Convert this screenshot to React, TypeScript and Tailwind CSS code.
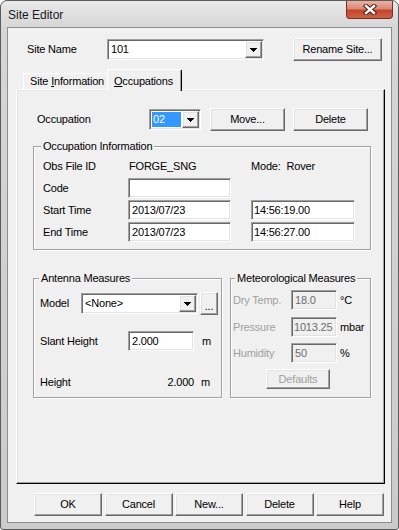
import React from "react";

const sunken =
  "border border-t-[#a0a0a0] border-l-[#a0a0a0] border-r-white border-b-white shadow-[inset_1px_1px_0_#696969,inset_-1px_-1px_0_#e3e3e3]";
const raised =
  "border border-t-white border-l-white border-r-[#696969] border-b-[#696969] shadow-[inset_-1px_-1px_0_#a0a0a0,inset_1px_1px_0_#e3e3e3] bg-[#f0f0f0]";

function DropArrow() {
  return (
    <svg width="7" height="4" viewBox="0 0 7 4" shapeRendering="crispEdges">
      <path d="M0 0h7v1h-1v1h-1v1h-1v1h-1v-1h-1v-1h-1v-1h-1z" fill="#000" />
    </svg>
  );
}

function Combo({
  value,
  className = "",
  highlighted = false,
}: {
  value: string;
  className?: string;
  highlighted?: boolean;
}) {
  return (
    <div className={`${sunken} bg-white flex p-[1px] ${className}`}>
      <div className="flex-1 min-w-0 flex p-[1px]">
        <div
          className={`flex-1 flex items-center pl-[1px] ${
            highlighted ? "bg-[#3399ff] text-white" : ""
          }`}
        >
          {value}
        </div>
      </div>
      <div className={`${raised} w-[17px] shrink-0 flex items-center justify-center`}>
        <DropArrow />
      </div>
    </div>
  );
}

function Field({
  value = "",
  className = "",
  disabled = false,
}: {
  value?: string;
  className?: string;
  disabled?: boolean;
}) {
  return (
    <div
      className={`${sunken} flex items-center pl-[3px] ${
        disabled ? "bg-[#f0f0f0] text-[#6d6d6d]" : "bg-white"
      } ${className}`}
    >
      {value}
    </div>
  );
}

function Btn({
  children,
  className = "",
  disabled = false,
}: {
  children: React.ReactNode;
  className?: string;
  disabled?: boolean;
}) {
  return (
    <button
      type="button"
      className={`${raised} flex items-center justify-center ${
        disabled ? "text-[#a0a0a0]" : "text-black"
      } ${className}`}
    >
      {children}
    </button>
  );
}

function Group({
  title,
  legendClass,
  className = "",
  children,
}: {
  title: string;
  legendClass: string;
  className?: string;
  children: React.ReactNode;
}) {
  return (
    <fieldset
      className={`border border-[#a0a0a0] shadow-[1px_1px_0_#fff,inset_1px_1px_0_#fff] ${className}`}
    >
      <legend className={`px-[2px] leading-[13px] bg-[#f0f0f0] ${legendClass}`}>{title}</legend>
      {children}
    </fieldset>
  );
}

function CloseButton() {
  return (
    <div className="mr-[5px] w-[47px] h-[18px] rounded-b-[4px] border border-t-0 border-[#7b2e20] bg-[linear-gradient(180deg,#eab0a2_0%,#d98a76_45%,#c4452c_55%,#cc6247_100%)] flex items-center justify-center">
      <svg width="14" height="11" viewBox="0 0 14 11">
        <path d="M3 2L11 9M11 2L3 9" stroke="#4d1a10" strokeWidth="4.4" strokeLinecap="square" />
        <path d="M3 2L11 9M11 2L3 9" stroke="#fff" strokeWidth="2.4" strokeLinecap="square" />
      </svg>
    </div>
  );
}

export default function App() {
  return (
    <div className="font-['Liberation_Sans',Arial,sans-serif] text-[11px] leading-[13px] tracking-[-0.2px] text-black w-[399px] h-[530px] flex flex-col border border-[#5b5b5b] rounded-t-[7px] rounded-b-[3px] overflow-hidden bg-[linear-gradient(180deg,#e9e9e9_0px,#d6d6d6_26px,#cbcbcb_100%)]">
      {/* title bar */}
      <div className="h-[26px] shrink-0 flex items-start justify-between">
        <div className="pl-[7px] pt-[7px] text-[12px] leading-[15px] tracking-normal text-[#1a1a1a]">Site Editor</div>
        <CloseButton />
      </div>

      {/* client area */}
      <div className="mx-[6px] mb-[6px] flex-1 border border-[#8e8e8e] bg-[#f0f0f0] flex flex-col">
        {/* site name row */}
        <div className="mt-[10px] pl-[19px] h-[23px] flex items-center">
          <span className="w-[80px]">Site Name</span>
          <Combo value="101" className="w-[157px] h-[21px]" />
          <Btn className="ml-[29px] w-[89px] h-[23px]">Rename Site...</Btn>
        </div>

        {/* tabs */}
        <div className="mt-[8px] pl-[15px] h-[20px] flex items-end relative z-10">
          <div className="w-[84px] h-[16px] border-t border-l border-white rounded-tl-[2px] flex items-center pl-[6px]">
            Site <span className="underline underline-offset-1 ml-[3px]">I</span>nformation
          </div>
          <div className="w-[75px] h-[22px] -mb-[2px] bg-[#f0f0f0] border-t border-l border-r border-t-white border-l-white border-r-black rounded-t-[2px] shadow-[inset_-1px_0_0_#a0a0a0] flex items-start pt-[5px] pl-[6px]">
            <span className="underline underline-offset-1">O</span>ccupations
          </div>
        </div>

        {/* tab panel */}
        <div className="ml-[8px] w-[369px] h-[395px] border border-t-white border-l-white border-r-black border-b-black shadow-[inset_-1px_-1px_0_#a0a0a0,inset_1px_1px_0_#e3e3e3] flex flex-col">
          {/* occupation row */}
          <div className="mt-[18px] pl-[20px] h-[23px] flex items-center">
            <span className="w-[112px]">Occupation</span>
            <Combo value="02" highlighted className="w-[52px] h-[21px]" />
            <Btn className="ml-[9px] w-[75px] h-[23px]">Move...</Btn>
            <Btn className="ml-[8px] w-[75px] h-[23px]">Delete</Btn>
          </div>

          {/* occupation information */}
          <Group
            title="Occupation Information"
            legendClass="ml-[7px]"
            className="mt-[9px] ml-[16px] w-[338px]"
          >
            <div className="pl-[9px] pt-[3px] pb-[7px] flex flex-col gap-[2px]">
              <div className="h-[20px] flex items-center">
                <span className="w-[85px]">Obs File ID</span>
                <span className="w-[123px] pl-[1px]">FORGE_SNG</span>
                <span>Mode:</span>
                <span className="ml-[6px]">Rover</span>
              </div>
              <div className="h-[20px] flex items-center">
                <span className="w-[85px]">Code</span>
                <Field className="w-[103px] h-[20px]" />
              </div>
              <div className="h-[20px] flex items-center">
                <span className="w-[85px]">Start Time</span>
                <Field value="2013/07/23" className="w-[103px] h-[20px]" />
                <Field value="14:56:19.00" className="ml-[20px] w-[104px] h-[20px] !pl-[2px]" />
              </div>
              <div className="h-[20px] flex items-center">
                <span className="w-[85px]">End Time</span>
                <Field value="2013/07/23" className="w-[103px] h-[20px]" />
                <Field value="14:56:27.00" className="ml-[20px] w-[104px] h-[20px] !pl-[2px]" />
              </div>
            </div>
          </Group>

          {/* lower groups */}
          <div className="mt-[22px] ml-[16px] flex items-start">
            <Group title="Antenna Measures" legendClass="ml-[5px]" className="w-[189px]">
              <div className="pl-[6px] pt-[7px] pb-[8px] flex flex-col">
                <div className="h-[23px] flex items-center">
                  <span className="w-[41px]">Model</span>
                  <Combo value="<None>" className="w-[117px] h-[21px]" />
                  <Btn className="ml-[2px] w-[18px] h-[23px] !items-end pb-[4px] leading-[8px]">...</Btn>
                </div>
                <div className="mt-[16px] h-[20px] flex items-center">
                  <span className="w-[88px]">Slant Height</span>
                  <Field value="2.000" className="w-[66px] h-[20px]" />
                  <span className="ml-[8px]">m</span>
                </div>
                <div className="mt-[24px] h-[14px] flex items-center">
                  <span className="w-[88px]">Height</span>
                  <span className="w-[66px] text-right">2.000</span>
                  <span className="ml-[7px]">m</span>
                </div>
              </div>
            </Group>

            <Group
              title="Meteorological Measures"
              legendClass="ml-[4px]"
              className="ml-[8px] w-[141px]"
            >
              <div className="pl-[2px] pt-[5px] pb-[8px] flex flex-col">
                <div className="h-[20px] flex items-center">
                  <span className="w-[58px] text-[#a0a0a0]">Dry Temp.</span>
                  <Field value="18.0" disabled className="w-[46px] h-[20px]" />
                  <span className="ml-[3px]">°C</span>
                </div>
                <div className="mt-[7px] h-[20px] flex items-center">
                  <span className="w-[58px] text-[#a0a0a0]">Pressure</span>
                  <Field value="1013.25" disabled className="w-[46px] h-[20px] !pl-[2px]" />
                  <span className="ml-[3px]">mbar</span>
                </div>
                <div className="mt-[6px] h-[20px] flex items-center">
                  <span className="w-[58px] text-[#a0a0a0]">Humidity</span>
                  <Field value="50" disabled className="w-[46px] h-[20px]" />
                  <span className="ml-[3px]">%</span>
                </div>
                <Btn disabled className="mt-[6px] ml-[33px] w-[64px] h-[20px]">
                  Defaults
                </Btn>
              </div>
            </Group>
          </div>
        </div>

        {/* bottom buttons */}
        <div className="mt-[9px] pl-[26px] flex gap-[2.5px]">
          <Btn className="w-[68px] h-[23px]">OK</Btn>
          <Btn className="w-[68px] h-[23px]">Cancel</Btn>
          <Btn className="w-[68px] h-[23px]">New...</Btn>
          <Btn className="w-[68px] h-[23px]">Delete</Btn>
          <Btn className="w-[68px] h-[23px]">Help</Btn>
        </div>
      </div>
    </div>
  );
}
